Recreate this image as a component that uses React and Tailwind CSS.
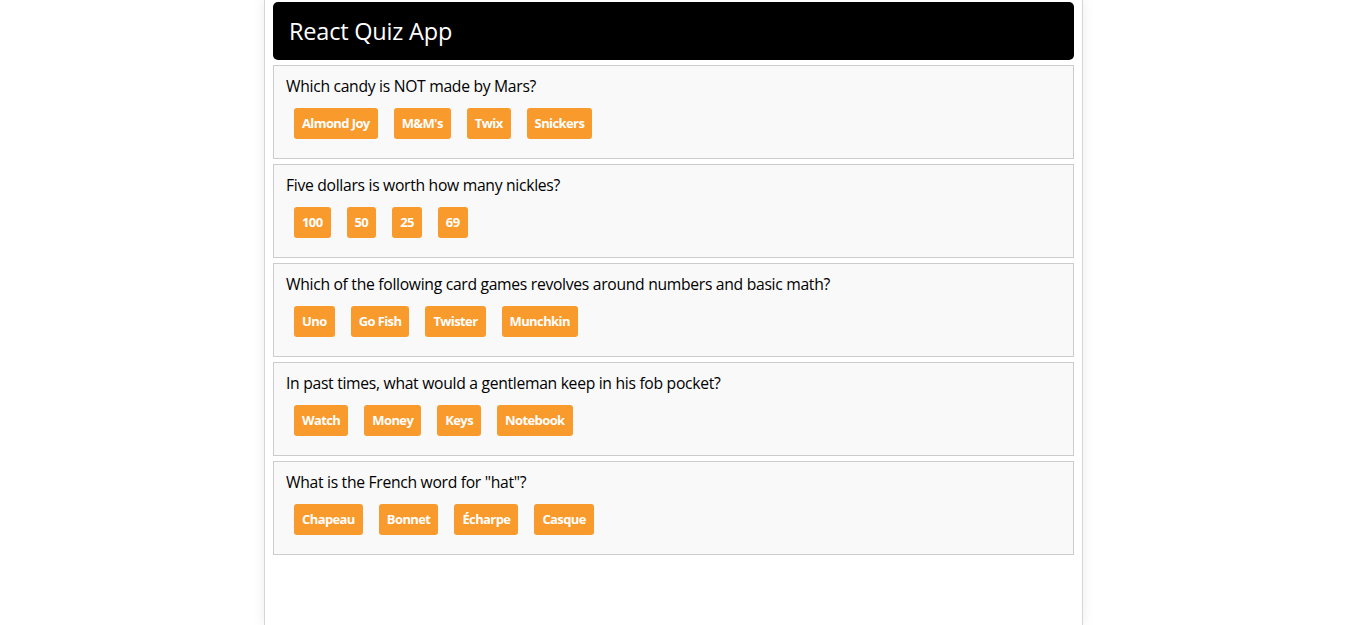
const questions = [
  { q: "Which candy is NOT made by Mars?", answers: ["Almond Joy", "M&M's", "Twix", "Snickers"] },
  { q: "Five dollars is worth how many nickles?", answers: ["100", "50", "25", "69"] },
  { q: "Which of the following card games revolves around numbers and basic math?", answers: ["Uno", "Go Fish", "Twister", "Munchkin"] },
  { q: "In past times, what would a gentleman keep in his fob pocket?", answers: ["Watch", "Money", "Keys", "Notebook"] },
  { q: 'What is the French word for "hat"?', answers: ["Chapeau", "Bonnet", "Écharpe", "Casque"] },
];

const App = () => {
  return (
    <div className="min-h-screen bg-white font-['Open_Sans',sans-serif]">
      <div className="w-[819px] mx-auto min-h-[625px] border-x border-[#d6d6d6] shadow-[0_0_12px_rgba(0,0,0,0.08)] px-[8px] pt-[2px]">
        <div className="bg-black rounded-[5px] h-[58px] flex items-center px-4 pt-[2px]">
          <h1 className="text-white text-[23.5px] tracking-[-0.2px]">React Quiz App</h1>
        </div>

        {questions.map((item, i) => (
          <div key={i} className="mt-[5px] border border-[#cccccc] bg-[#f9f9f9] h-[94px] px-3 pt-[10px]">
            <p className="text-[15.7px] leading-[21px] text-black tracking-[-0.3px]">{item.q}</p>
            <div className="flex gap-4 mt-[11px] ml-2">
              {item.answers.map((a) => (
                <button
                  key={a}
                  className="h-[31px] px-2 rounded-[3px] bg-[#f99a2c] text-white text-[13px] font-bold tracking-[-0.6px]"
                >
                  {a}
                </button>
              ))}
            </div>
          </div>
        ))}
      </div>
    </div>
  );
};

export default App;
